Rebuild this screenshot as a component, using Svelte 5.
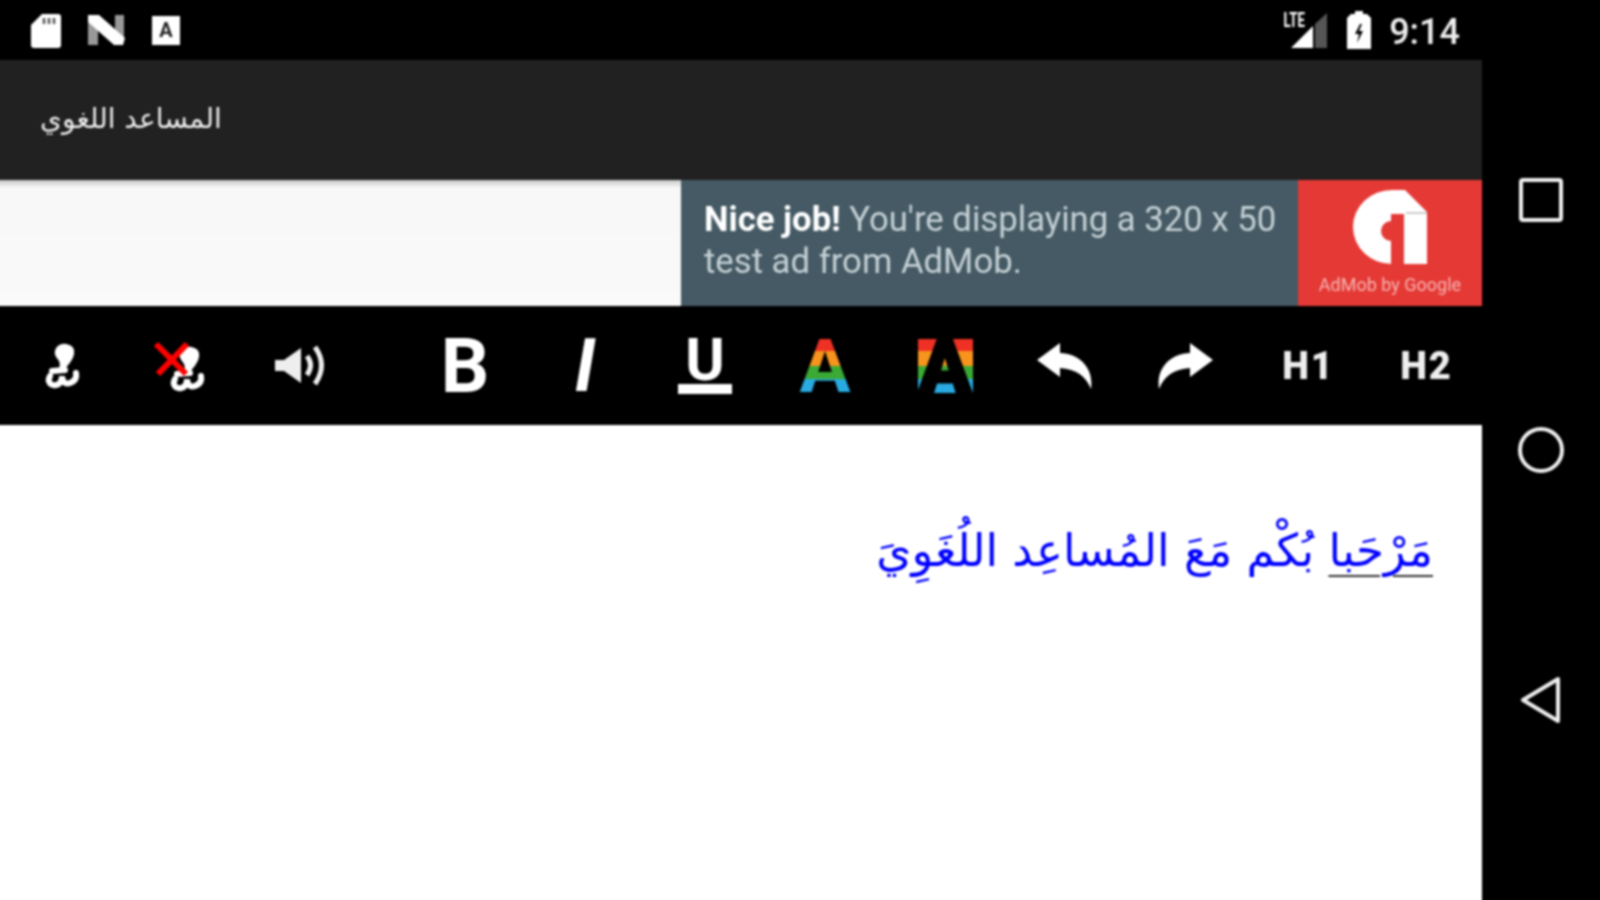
<script>
	// blob glyph used by the two voice buttons
	const blobHead = 'M19 16c1-5 6-8 11-7 6 1 9 4 8 10-1 5-3 7-5 10-2 2-3 4-4 6l-6-1c1-3 1-6 0-8-2-3-5-6-4-10z';
	const blobBody = 'M16 36l13-1M14 41c-3 5 0 10 6 9 5-1 6-5 6-9 0 5 3 9 8 7 5-2 7-5 6-10';
</script>

<div class="frame">
	<div class="screen">
		<div class="main">
			<header class="status">
				<div class="status-group left">
					<svg width="30" height="35" viewBox="0 0 30 35">
						<path fill="#fff" d="M11 1h16a3 3 0 0 1 3 3v28a3 3 0 0 1-3 3H3a3 3 0 0 1-3-3V12z" />
						<path stroke="#555" stroke-width="2.5" d="M13 5v6M18 5v6M23 5v6" />
					</svg>
					<svg width="37" height="30" viewBox="0 0 37 30">
						<path fill="#999" d="M0 3l10 6v21H0zM27 0h9v24l-9-6z" />
						<path fill="#fff" d="M0 0h11l26 23-2 7H26L0 7z" />
					</svg>
					<div class="a-badge">A</div>
				</div>
				<div class="status-group right">
					<div class="signal">
						<span class="lte">LTE</span>
						<svg width="36" height="36" viewBox="0 0 36 36">
							<path fill="#555" d="M24 11L36 0V35H24z" />
							<path fill="#fff" d="M0 35L22 13V35z" />
						</svg>
					</div>
					<svg width="24" height="38" viewBox="0 0 24 38">
						<path fill="#fff" d="M8 0h8v3h4l4 4v31H0V7l4-4h4z" />
						<path fill="#000" d="M13 13l-5 10h4l-2 9 6-12h-4l3-7z" />
					</svg>
					<span class="clock">9:14</span>
				</div>
			</header>

			<div class="appbar">
				<span class="title" dir="rtl">المساعد اللغوي</span>
			</div>

			<div class="ad-row">
				<div class="ad-blank"></div>
				<div class="ad-copy"><b>Nice job!</b> You're displaying a 320 x 50<br />test ad from AdMob.</div>
				<div class="ad-brand">
					<svg width="76" height="74" viewBox="0 0 76 74">
						<path fill="#fff" d="M40 74A39 37 0 0 1 40 0H53L75 22V74H52V24H39V31A10 10 0 0 0 39 51V74Z" />
						<path fill="#ccc" d="M54 22h21v2H54z" />
					</svg>
					<span>AdMob by Google</span>
				</div>
			</div>

			<nav class="toolbar">
				<div class="tool">
					<svg class="voice" width="56" height="60" viewBox="0 0 56 60">
						<path fill="#fff" d={blobHead} />
						<path fill="none" stroke="#fff" stroke-width="6" stroke-linecap="round" d={blobBody} />
					</svg>
				</div>
				<div class="tool">
					<svg class="voice-off" width="66" height="60" viewBox="0 0 66 60">
						<g transform="translate(15 3)">
							<path fill="#fff" d={blobHead} />
							<path fill="none" stroke="#fff" stroke-width="6" stroke-linecap="round" d={blobBody} />
						</g>
						<path fill="none" stroke="#f00" stroke-width="6" d="M10 9l30 30M41 9L12 39" />
					</svg>
				</div>
				<div class="tool">
					<svg width="50" height="46" viewBox="0 0 50 46">
						<path fill="#eee" d="M0 17h9L26 5v35L9 28H0z" />
						<path fill="none" stroke="#eee" stroke-width="5" d="M32 13q7 9 0 19M40 4q13 18 0 37" />
					</svg>
				</div>
				<div class="tool gap">
					<span class="glyph">B</span>
				</div>
				<div class="tool">
					<span class="glyph italic">I</span>
				</div>
				<div class="tool">
					<div class="under">
						<span>U</span>
						<i></i>
					</div>
				</div>
				<div class="tool">
					<span class="glyph rainbow">A</span>
				</div>
				<div class="tool">
					<span class="glyph rainbow-box">A</span>
				</div>
				<div class="tool">
					<svg width="56" height="46" viewBox="0 0 56 46">
						<path fill="#fff" d="M0 17L23 0V10C43 11 57 25 54 46 49 33 39 26 23 25V34Z" />
					</svg>
				</div>
				<div class="tool">
					<svg width="56" height="46" viewBox="0 0 56 46">
						<path fill="#fff" transform="matrix(-1 0 0 1 56 0)" d="M0 17L23 0V10C43 11 57 25 54 46 49 33 39 26 23 25V34Z" />
					</svg>
				</div>
				<div class="tool"><span class="head one">H1</span></div>
				<div class="tool"><span class="head">H2</span></div>
			</nav>

			<div class="editor">
				<p dir="rtl"><span class="composing">مَرْحَبا</span> بُكْم مَعَ المُساعِد اللُغَوِيَ</p>
			</div>
		</div>

		<aside class="navbar">
			<svg width="46" height="46" viewBox="0 0 46 46">
				<rect x="3" y="3" width="40" height="40" rx="2" fill="none" stroke="#eee" stroke-width="4" />
			</svg>
			<svg width="46" height="46" viewBox="0 0 46 46">
				<circle cx="23" cy="23" r="21" fill="none" stroke="#eee" stroke-width="4" />
			</svg>
			<svg width="46" height="50" viewBox="0 0 46 50">
				<path d="M5 25L40 4V46z" fill="none" stroke="#eee" stroke-width="4" stroke-linejoin="round" />
			</svg>
		</aside>
	</div>
</div>

<style>
	:global(body) {
		margin: 0;
		background: #000;
	}

	.frame {
		width: 1600px;
		height: 900px;
		overflow: hidden;
	}

	/* 6px bleed on every side so the blur does not fade at the window edges */
	.screen {
		display: flex;
		width: 1612px;
		height: 912px;
		margin: -6px;
		background: #000;
		font-family: Roboto, "Liberation Sans", sans-serif;
		filter: blur(0.8px);
	}

	.main {
		width: 1488px;
		display: flex;
		flex-direction: column;
	}

	.status {
		height: 66px;
		display: flex;
		justify-content: space-between;
		align-items: center;
		padding: 6px 22px 0 37px;
		box-sizing: border-box;
	}

	.status-group {
		display: flex;
		align-items: center;
	}

	.status-group.left {
		gap: 27px;
	}

	.status-group.right {
		gap: 18px;
	}

	.a-badge {
		width: 28px;
		height: 29px;
		background: #fff;
		color: #222;
		font-size: 20px;
		font-weight: 700;
		line-height: 29px;
		text-align: center;
	}

	.signal {
		display: flex;
		align-items: flex-start;
		margin: 1px 2px 0 0;
	}

	.lte {
		margin-right: -14px;
		color: #fff;
		font-size: 21px;
		line-height: 15px;
		font-weight: 700;
		transform: scaleX(0.63);
		transform-origin: right;
	}

	.clock {
		margin-top: 3px;
		color: #eee;
		font-size: 36px;
		font-weight: 500;
	}

	.appbar {
		height: 120px;
		background: #212121;
		display: flex;
		align-items: center;
		padding: 0 0 4px 46px;
		box-sizing: border-box;
	}

	.title {
		color: #eee;
		font-family: "DejaVu Sans", sans-serif;
		font-size: 28px;
	}

	.ad-row {
		height: 126px;
		display: flex;
	}

	.ad-blank {
		width: 687px;
		background: linear-gradient(#c8c8c8, #f8f8f8 8px, #fafafa);
	}

	.ad-copy {
		width: 617px;
		box-sizing: border-box;
		background: #455a64;
		color: #c5d0d5;
		padding: 18px 0 0 23px;
		font-size: 34.7px;
		line-height: 42px;
		white-space: nowrap;
	}

	.ad-copy b {
		color: #fff;
		font-weight: 700;
	}

	.ad-brand {
		flex: 1;
		background: #e53935;
		display: flex;
		flex-direction: column;
		align-items: center;
		padding-top: 10px;
		color: #f5b5b3;
		font-size: 18px;
		white-space: nowrap;
		box-sizing: border-box;
	}

	.ad-brand span {
		margin-top: 10px;
	}

	.toolbar {
		height: 119px;
		display: flex;
		padding-left: 6px;
		background: #000;
	}

	.tool {
		flex: 0 0 120px;
		display: flex;
		align-items: center;
		justify-content: center;
	}

	.tool.gap {
		margin-left: 45px;
	}

	.voice {
		margin: -2px 0 0 8px;
	}

	.voice-off {
		margin: -2px 0 0 -2px;
	}

	.glyph {
		display: block;
		height: 54px;
		line-height: 54px;
		font-size: 76px;
		font-weight: 700;
		color: #fff;
	}

	.italic {
		font-style: italic;
		font-size: 74px;
	}

	.under {
		display: flex;
		flex-direction: column;
		align-items: center;
		color: #fff;
		font-size: 60px;
		font-weight: 700;
		line-height: 44px;
	}

	.under i {
		width: 54px;
		height: 10px;
		margin-top: 2px;
		background: #fff;
	}

	.rainbow,
	.rainbow-box {
		--bands: linear-gradient(#ee3124 12px, #f7941d 12px 27px, #3aaa35 27px 40px, #29abe2 40px);
	}

	.rainbow {
		background: var(--bands);
		-webkit-background-clip: text;
		background-clip: text;
		color: transparent;
	}

	.rainbow-box {
		width: 55px;
		text-align: center;
		background: var(--bands);
		color: #000;
		font-weight: 900;
		-webkit-text-stroke: 3px #000;
	}

	.head {
		color: #eee;
		font-size: 38px;
		font-weight: 900;
		letter-spacing: 2px;
		margin-left: 3px;
	}

	.head.one {
		margin-left: 7px;
	}

	.editor {
		flex: 1;
		background: #fff;
		padding: 0 49px 0 56px;
	}

	.editor p {
		margin: 99px 0 0;
		font-family: "DejaVu Sans", sans-serif;
		font-size: 45.2px;
		color: #00f;
		white-space: nowrap;
	}

	.composing {
		text-decoration: underline 2px #333;
		text-underline-offset: 9px;
	}

	.navbar {
		flex: 1;
		display: grid;
		grid-auto-rows: 250px;
		justify-items: center;
		align-items: center;
		padding: 81px 6px 0 0;
	}
</style>
